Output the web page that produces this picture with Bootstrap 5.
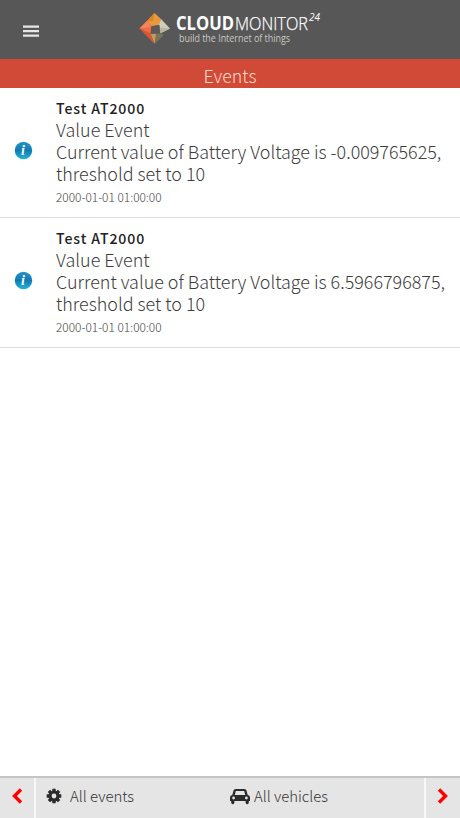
<!DOCTYPE html>
<html lang="en">
<head>
<meta charset="utf-8">
<meta name="viewport" content="width=device-width, initial-scale=1">
<title>Events</title>
<link href="https://cdn.jsdelivr.net/npm/bootstrap@5.3.0/dist/css/bootstrap.min.css" rel="stylesheet">
<style>
body{font-family:"Noto Sans CJK SC","Noto Sans",sans-serif;font-weight:300;color:#3c3c3c;font-size:17.92px;line-height:22px}
.top-bar{height:59px;background:#575757}
.menu-btn{width:62px;padding-top:2px!important}
.brand-mark{width:184px;height:40px;margin-left:77px;margin-top:-1px}
.title-bar{height:29px;background:#d14937;color:#fbdccb;line-height:32px;font-size:17.8px}
.event-row{height:130px;padding:9px 10px 0 14px;border-bottom:1px solid #dcdcdc!important}
.event-icon{width:19px;height:19px;margin-right:23px;margin-top:-14px}
.event-name{font-size:14.1px;font-weight:500;letter-spacing:.9px;color:#222;height:21px}
.event-time{font-size:11.9px;color:#444;line-height:25px}
.foot-bar{height:42px;background:#e5e5e5;border-top:2px solid #c4c4c4;font-size:14.9px;color:#333;line-height:20px}
.arrow-l{width:36px;border-right:2px solid #f8f8f8!important;padding-bottom:4px}
.arrow-r{width:36px;border-left:2px solid #f8f8f8!important;padding-bottom:4px}
.foot-link{padding-bottom:4px}
.foot-events{width:194px;padding-left:10px}
.gear{width:16px;height:16px;margin-right:8px}
.car{width:20px;height:17px;margin-right:4px}
</style>
</head>
<body class="d-flex flex-column vh-100 bg-white overflow-hidden">
<header class="top-bar d-flex align-items-center flex-shrink-0">
<button class="menu-btn btn p-0 border-0" aria-label="Menu"><svg class="d-block mx-auto" width="16" height="14" viewBox="0 0 16 14" fill="#e6e6e6"><path d="M0 1.500h16v2.200H0zM0 6h16v2.200H0zM0 10.500h16v2.200H0z"/></svg></button>
<svg class="brand-mark" viewBox="0 0 184 40">
<path d="M15.500 4 8 12l4 5.500 9-1.500 1-6z" fill="#e9993c"/><path d="M15.500 4 8 12l6 0z" fill="#d98425"/>
<path d="M8 12 .5 19.500l11 5.500 1-8z" fill="#ef6a45"/><path d="M8 12 .5 19.500 12 18z" fill="#f5865c"/>
<path d="M.5 19.500 11.500 25l4 10z" fill="#df552f"/><path d="M11.500 24.500 15.500 35l3-10.500z" fill="#c79a58"/>
<path d="M22 10l9 9.500-10 5-1-8.500z" fill="#cfceb8"/><path d="M31 19.500 21 24.500l-1-6z" fill="#b7b69d"/>
<path d="M17 24.500l4-.5 4 2-9.500 9z" fill="#77745a"/><path d="M12.500 17l8-1 .8 8.500-9.500.3z" fill="#5c5958"/>
<g font-family="'Open Sans','Noto Sans',sans-serif" fill="#fff"><text x="37" y="21" font-size="19" font-weight="700" textLength="58" lengthAdjust="spacingAndGlyphs">CLOUD</text><text x="96" y="21" font-size="19" font-weight="300" stroke="#fff" stroke-width=".25" textLength="73" lengthAdjust="spacingAndGlyphs">MONITOR</text><text x="170" y="12" font-size="10" font-weight="400" font-style="italic" textLength="11" lengthAdjust="spacingAndGlyphs">24</text><text x="40" y="33" font-size="10.500" font-weight="400" fill="#c9c8c3" textLength="111" lengthAdjust="spacingAndGlyphs">build the Internet of things</text></g>
</svg>
</header>
<div class="title-bar text-center flex-shrink-0">Events</div>
<main class="flex-grow-1">
<article class="event-row d-flex align-items-start border-bottom">
<svg class="event-icon align-self-center flex-shrink-0" viewBox="0 0 19 19"><defs><linearGradient id="blue" x2="0" y2="1"><stop stop-color="#2a93c4"/><stop offset=".5" stop-color="#0f7bb2"/><stop offset="1" stop-color="#25b5da"/></linearGradient></defs><circle cx="9.500" cy="9.500" r="8.700" fill="url(#blue)"/><text x="7" y="14" font-family="'Liberation Serif',serif" font-size="14" font-weight="700" font-style="italic" fill="#fff">i</text></svg>
<div><div class="event-name">Test AT2000</div><div>Value Event</div><div class="text-nowrap">Current value of Battery Voltage is -0.009765625,<br>threshold set to 10</div><div class="event-time">2000-01-01 01:00:00</div></div>
</article>
<article class="event-row d-flex align-items-start border-bottom">
<svg class="event-icon align-self-center flex-shrink-0" viewBox="0 0 19 19"><circle cx="9.500" cy="9.500" r="8.700" fill="url(#blue)"/><text x="7" y="14" font-family="'Liberation Serif',serif" font-size="14" font-weight="700" font-style="italic" fill="#fff">i</text></svg>
<div><div class="event-name">Test AT2000</div><div>Value Event</div><div class="text-nowrap">Current value of Battery Voltage is 6.5966796875,<br>threshold set to 10</div><div class="event-time">2000-01-01 01:00:00</div></div>
</article>
</main>
<footer class="foot-bar d-flex align-items-stretch flex-shrink-0">
<div class="arrow-l d-flex align-items-center justify-content-center flex-shrink-0"><svg width="12" height="16" viewBox="0 0 12 16" fill="none" stroke="#f00" stroke-width="3.400"><path d="M10 1.500 3.500 8l6.500 6.500"/></svg></div>
<div class="foot-link foot-events d-flex align-items-center flex-shrink-0"><svg class="gear" viewBox="0 0 16 16"><g stroke="#2b2b2b" stroke-width="3.400"><path d="M8 .7v14.600M.7 8h14.600M2.900 2.900l10.200 10.200M13.100 2.900 2.900 13.100"/></g><circle cx="8" cy="8" r="5.600" fill="#2b2b2b"/><circle cx="8" cy="8" r="2.400" fill="#e5e5e5"/></svg><span>All events</span></div>
<div class="foot-link d-flex align-items-center flex-grow-1"><svg class="car" viewBox="0 0 20 17"><path fill="#2b2b2b" fill-rule="evenodd" d="M5.500 1h9q1.500 0 2 1.500L17.700 7Q20 7.300 20 9.500V13h-1.200v1.600a1.600 1.600 0 0 1-3.200 0V13H4.400v1.600a1.600 1.600 0 0 1-3.200 0V13H0V9.500Q0 7.300 2.300 7L3.500 2.500Q4 1 5.500 1zM5.800 3 4.800 7h10.400l-1-4zM3.600 8.600a1.400 1.400 0 1 0 0 2.800 1.400 1.400 0 0 0 0-2.800zm12.800 0a1.400 1.400 0 1 0 0 2.800 1.400 1.400 0 0 0 0-2.800z"/></svg><span>All vehicles</span></div>
<div class="arrow-r d-flex align-items-center justify-content-center flex-shrink-0"><svg width="12" height="16" viewBox="0 0 12 16" fill="none" stroke="#f00" stroke-width="3.400"><path d="M2 1.500 8.500 8 2 14.500"/></svg></div>
</footer>
<script src="https://cdn.jsdelivr.net/npm/bootstrap@5.3.0/dist/js/bootstrap.bundle.min.js"></script>
</body>
</html>
